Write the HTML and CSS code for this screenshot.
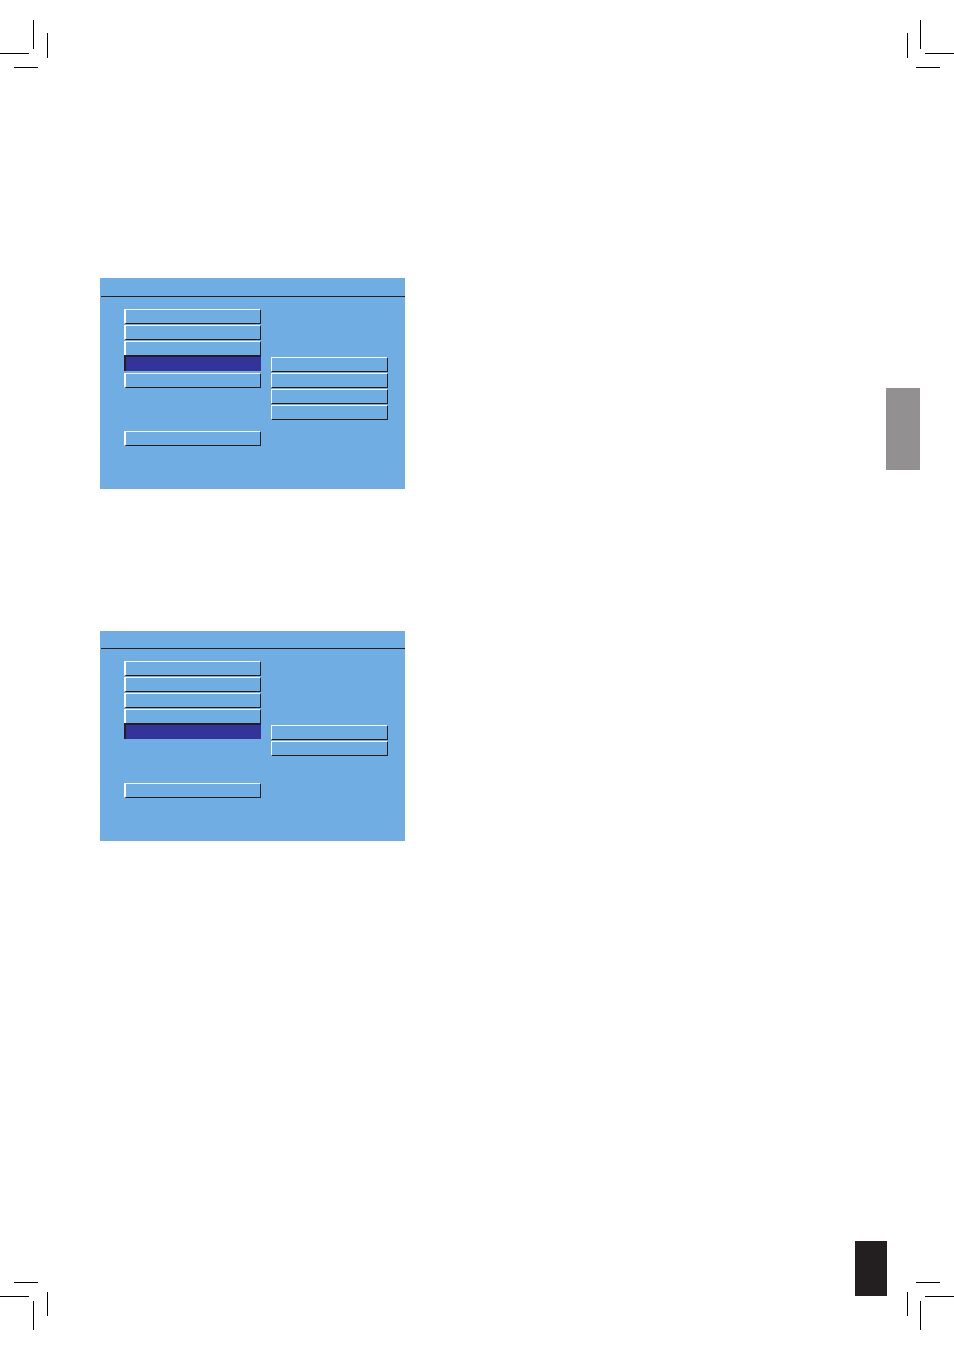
FILE: index.html
```html
<!DOCTYPE html>
<html lang="en">
<head>
    <meta charset="UTF-8">
    <meta name="viewport" content="width=device-width, initial-scale=1">
    <title>Setup Menu</title>
    <link rel="stylesheet" href="styles.css">
</head>
<body>
    <!-- Top crop marks -->
    <header class="marks">
        <svg class="mark" viewBox="0 0 48 68" aria-hidden="true">
            <path d="M33 20h1v29h-1zM47 33h1v25h-1zM0 53h29v1H0zM14 67h24v1H14z"/>
        </svg>
        <svg class="mark" viewBox="0 0 48 68" aria-hidden="true">
            <path d="M14 20h1v29h-1zM1 33h1v25H1zM19 53h29v1H19zM10 67h24v1H10z"/>
        </svg>
    </header>
    <main class="content">
        <div class="screens">
            <section class="screen">
                <div class="screen-title tall"></div>
                <div class="menus">
                    <div class="menu">
                        <button class="item" aria-label="Item 1"></button>
                        <button class="item" aria-label="Item 2"></button>
                        <button class="item" aria-label="Item 3"></button>
                        <button class="item selected" aria-label="Item 4"></button>
                        <button class="item" aria-label="Item 5"></button>
                        <button class="item exit" aria-label="Exit"></button>
                    </div>
                    <div class="menu options from-fourth">
                        <button class="item" aria-label="Option 1"></button>
                        <button class="item" aria-label="Option 2"></button>
                        <button class="item" aria-label="Option 3"></button>
                        <button class="item" aria-label="Option 4"></button>
                    </div>
                </div>
            </section>
            <section class="screen">
                <div class="screen-title"></div>
                <div class="menus">
                    <div class="menu">
                        <button class="item" aria-label="Item 1"></button>
                        <button class="item" aria-label="Item 2"></button>
                        <button class="item" aria-label="Item 3"></button>
                        <button class="item" aria-label="Item 4"></button>
                        <button class="item selected" aria-label="Item 5"></button>
                        <button class="item exit" aria-label="Exit"></button>
                    </div>
                    <div class="menu options from-fifth">
                        <button class="item" aria-label="Option 1"></button>
                        <button class="item" aria-label="Option 2"></button>
                    </div>
                </div>
            </section>
        </div>
        <aside class="side-tab"></aside>
    </main>
    <!-- Page number block and bottom crop marks -->
    <footer class="marks bottom">
        <svg class="mark" viewBox="0 0 48 68" aria-hidden="true">
            <path d="M14 0h24v1H14zM0 14h29v1H0zM47 10h1v24h-1zM33 19h1v29h-1z"/>
        </svg>
        <div class="page-block"></div>
        <svg class="mark" viewBox="0 0 48 68" aria-hidden="true">
            <path d="M10 0h24v1H10zM19 14h29v1H19zM1 10h1v24H1zM14 19h1v29h-1z"/>
        </svg>
    </footer>
</body>
</html>
```
FILE: styles.css
```css
body {
    margin: 0;
    min-height: 100vh;
    display: flex;
    flex-direction: column;
    background-color: white;
    font-family: "Liberation Sans", Arial, sans-serif;
}
.marks {
    display: flex;
    justify-content: space-between;
}
.marks.bottom {
    align-items: flex-end;
}
.mark {
    display: block;
    width: 48px;
    height: 68px;
    fill: black;
}
.content {
    flex: 1;
    display: flex;
    justify-content: space-between;
    align-items: flex-start;
}
.screens {
    flex: 1;
    padding-top: 210px;
    padding-left: 100px;
    display: flex;
    flex-direction: column;
    gap: 142px;
}
.screen {
    max-width: 305px;
    padding-bottom: 43px;
    background-color: #70ade3;
}
.screen-title {
    height: 17px;
    margin-left: 1px;
    border-bottom: 1px solid #231f20;
}
.screen-title.tall {
    height: 18px;
}
.menus {
    display: grid;
    grid-template-columns: 137fr 117fr;
    gap: 10px;
    padding: 12px 17px 0 24px;
}
.menu {
    display: flex;
    flex-direction: column;
    gap: 1px;
}
.item {
    box-sizing: border-box;
    height: 15px;
    padding: 0;
    border: 1px solid #231f20;
    border-top-color: white;
    border-left: 2px solid white;
    background-color: #70ade3;
    cursor: pointer;
}
.item.selected {
    height: 14px;
    margin-bottom: 1px;
    border: none;
    border-left: 2px solid #231f20;
    background-color: #333399;
    box-shadow: 0 -2px #231f20;
}
.item.exit {
    margin-top: 42px;
}
.options .item {
    border-left-width: 1px;
}
/* options start level with the selected item */
.from-fourth {
    padding-top: 48px;
}
.from-fifth {
    padding-top: 64px;
}
.side-tab {
    width: 34px;
    height: 82px;
    margin-top: 320px;
    margin-right: 34px;
    background-color: #929091;
}
.page-block {
    width: 32px;
    height: 55px;
    margin-left: auto;
    margin-right: 19px;
    margin-bottom: 54px;
    background-color: #231f20;
}
```
